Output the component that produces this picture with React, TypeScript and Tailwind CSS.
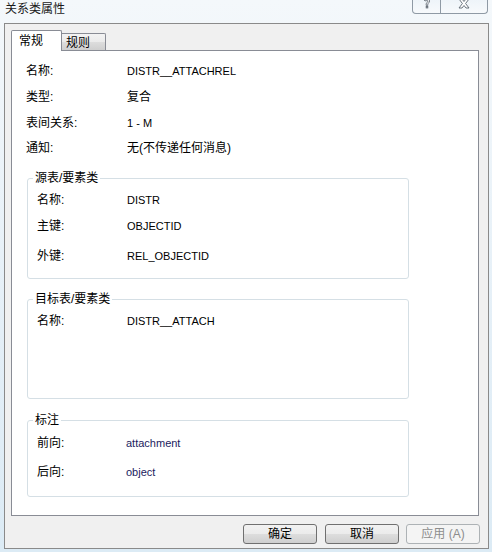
import React from "react";

function Row({
  label,
  value,
  labelW,
  valueCls,
  cls,
}: {
  label: string;
  value: string;
  labelW: string;
  valueCls: string;
  cls: string;
}) {
  return (
    <div className={`flex h-[16px] items-center ${cls}`}>
      <span className={`${labelW} shrink-0 text-[12px] leading-[16px] text-black`}>{label}</span>
      <span className={`leading-[16px] ${valueCls}`}>{value}</span>
    </div>
  );
}

function Group({
  title,
  cls,
  children,
}: {
  title: string;
  cls: string;
  children: React.ReactNode;
}) {
  return (
    <div className={`relative ml-[15px] w-[382px] rounded-[3px] border border-[#d5dfe5] ${cls}`}>
      <span className="absolute left-[5px] top-[-9px] bg-white px-[2px] text-[12px] leading-[16px] text-black">
        {title}
      </span>
      {children}
    </div>
  );
}

export default function App() {
  return (
    <div className="flex h-[552px] w-[492px] flex-col overflow-hidden bg-[linear-gradient(180deg,#f4f8fb_0%,#e4eff7_60%,#dcebf5_100%)] font-['Liberation_Sans','Noto_Sans_CJK_SC',sans-serif] text-black">
      {/* title bar */}
      <div className="flex h-[23px] shrink-0 items-start">
        <span className="ml-[5px] mt-[1px] text-[12px] leading-[16px] text-[#1a1a1a]">关系类属性</span>
        <div className="ml-auto mr-[4px] flex h-[14px]">
          <div className="flex h-[14px] w-[29px] items-start justify-center rounded-bl-[4px] border border-t-0 border-[#8f9aa5] bg-[linear-gradient(180deg,#eef4f9,#f7fafc)]">
            <svg width="10" height="10" viewBox="0 0 10 10" className="mt-[-1px]">
              <path
                d="M2.5 1.5 C2.5 -0.5 7.5 -0.5 7.5 2 C7.5 3.8 5.8 4 5.8 5.5 L5.8 6.3 L4.2 6.3 L4.2 5.2 C4.2 3.6 5.8 3.4 5.8 2.2 C5.8 1.2 4.2 1.2 4.2 2 Z"
                fill="#ffffff"
                stroke="#5c6670"
                strokeWidth="0.9"
              />
              <rect x="4.2" y="7.3" width="1.6" height="1.6" fill="#ffffff" stroke="#5c6670" strokeWidth="0.9" />
            </svg>
          </div>
          <div className="flex h-[14px] w-[47px] items-start justify-center rounded-br-[4px] border border-l-0 border-t-0 border-[#8f9aa5] bg-[linear-gradient(180deg,#eef4f9,#f7fafc)]">
            <svg width="12" height="10" viewBox="0 0 12 10" className="mt-[-1px]">
              <path
                d="M1 0 L4 0 L6 2.5 L8 0 L11 0 L7.6 4.5 L11 9 L8 9 L6 6.5 L4 9 L1 9 L4.4 4.5 Z"
                fill="#ffffff"
                stroke="#5c6670"
                strokeWidth="0.9"
              />
            </svg>
          </div>
        </div>
      </div>

      {/* client area */}
      <div className="ml-[4px] flex h-[526px] w-[485px] shrink-0 flex-col border border-[#8a8a8a] bg-[#f0f0f0] pl-[6px] pr-[8px]">
        {/* tabs */}
        <div className="mt-[6px] flex h-[20px] items-end">
          <div className="relative z-10 mb-[-1px] flex h-[21px] w-[51px] items-start rounded-t-[2px] border border-b-0 border-[#898c95] bg-white pl-[7px] pt-[2px] text-[12px] leading-[16px]">
            常规
          </div>
          <div className="flex h-[17px] w-[44px] items-start rounded-tr-[2px] border border-b-0 border-l-0 border-[#898c95] bg-[linear-gradient(180deg,#f3f3f3_0%,#ebebeb_50%,#dddddd_51%,#cfcfcf_100%)] pl-[4px] pt-[1px] text-[12px] leading-[16px]">
            规则
          </div>
        </div>

        {/* panel */}
        <div className="flex h-[466px] w-[468px] flex-col border border-[#898c95] bg-white">
          <div className="flex flex-col pl-[14px] pt-[12px]">
            <Row label="名称:" value="DISTR__ATTACHREL" labelW="w-[101px]" valueCls="text-[11px]" cls="" />
            <Row label="类型:" value="复合" labelW="w-[101px]" valueCls="text-[12px]" cls="mt-[10px]" />
            <Row label="表间关系:" value="1 - M" labelW="w-[101px]" valueCls="text-[11px]" cls="mt-[10px]" />
            <Row label="通知:" value="无(不传递任何消息)" labelW="w-[101px]" valueCls="text-[12px]" cls="mt-[9px]" />
          </div>

          <Group title="源表/要素类" cls="mt-[22px] h-[101px] pl-[9px] pt-[13px]">
            <Row label="名称:" value="DISTR" labelW="w-[90px]" valueCls="text-[11px]" cls="" />
            <Row label="主键:" value="OBJECTID" labelW="w-[90px]" valueCls="text-[11px]" cls="mt-[10px]" />
            <Row label="外键:" value="REL_OBJECTID" labelW="w-[90px]" valueCls="text-[11px]" cls="mt-[14px]" />
          </Group>

          <Group title="目标表/要素类" cls="mt-[20px] h-[100px] pl-[9px] pt-[13px]">
            <Row label="名称:" value="DISTR__ATTACH" labelW="w-[90px]" valueCls="text-[11px]" cls="" />
          </Group>

          <Group title="标注" cls="mt-[21px] h-[77px] pl-[9px] pt-[14px]">
            <Row label="前向:" value="attachment" labelW="w-[89px]" valueCls="text-[11px] text-[#1b1b5e]" cls="" />
            <Row label="后向:" value="object" labelW="w-[89px]" valueCls="text-[11px] text-[#1b1b5e]" cls="mt-[13px]" />
          </Group>
        </div>

        {/* buttons */}
        <div className="mt-[8px] flex h-[20px] justify-end">
          <button className="h-[20px] w-[74px] rounded-[3px] border border-[#707070] bg-[linear-gradient(180deg,#f2f2f2_0%,#ebebeb_50%,#dddddd_51%,#cfcfcf_100%)] text-[12px] leading-[16px] text-black">
            确定
          </button>
          <button className="ml-[8px] h-[20px] w-[74px] rounded-[3px] border border-[#707070] bg-[linear-gradient(180deg,#f2f2f2_0%,#ebebeb_50%,#dddddd_51%,#cfcfcf_100%)] text-[12px] leading-[16px] text-black">
            取消
          </button>
          <button className="ml-[7px] h-[20px] w-[74px] rounded-[3px] border border-[#adb2b5] bg-[#f4f4f4] text-[12px] leading-[16px] text-[#8d8d8d]">
            应用 (A)
          </button>
        </div>
      </div>
    </div>
  );
}
